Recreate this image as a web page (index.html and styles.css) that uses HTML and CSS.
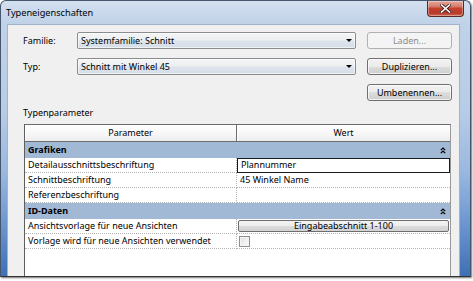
FILE: index.html
```html
<!DOCTYPE html>
<html>
<head>
<meta charset="utf-8">
<title>Typeneigenschaften</title>
<link rel="stylesheet" href="styles.css">
</head>
<body>
<div class="window">
  <div class="titlebar">
    <span class="title">Typeneigenschaften</span>
    <div class="close">
      <svg width="11" height="9" viewBox="0 0 11 9"><path d="M1.5 1 L9.5 8 M9.5 1 L1.5 8" stroke="#3a2020" stroke-width="3.2" stroke-linecap="square"/><path d="M1.5 1 L9.5 8 M9.5 1 L1.5 8" stroke="#ffffff" stroke-width="1.6" stroke-linecap="square"/></svg>
    </div>
  </div>
  <div class="client">
    <div class="form">
      <span class="lbl">Familie:</span>
      <div class="combo"><span>Systemfamilie: Schnitt</span><i class="arrow"></i></div>
      <div class="btn disabled">Laden...</div>
      <span class="lbl">Typ:</span>
      <div class="combo"><span>Schnitt mit Winkel 45</span><i class="arrow"></i></div>
      <div class="btn">Duplizieren...</div>
      <div class="btn col3">Umbenennen...</div>
    </div>
    <div class="section">Typenparameter</div>
    <div class="table">
      <div class="thead">
        <div class="th">Parameter</div>
        <div class="th">Wert</div>
      </div>
      <div class="group"><span>Grafiken</span><svg class="chev" width="6" height="7" viewBox="0 0 6 7"><path d="M0.8 3.2 L3 1 L5.2 3.2 M0.8 6.2 L3 4 L5.2 6.2" fill="none" stroke="#000" stroke-width="1.2"/></svg></div>
      <div class="row"><div class="c1">Detailausschnittsbeschriftung</div><div class="c2 edit">Plannummer</div></div>
      <div class="row"><div class="c1">Schnittbeschriftung</div><div class="c2">45 Winkel Name</div></div>
      <div class="row"><div class="c1">Referenzbeschriftung</div><div class="c2"></div></div>
      <div class="group"><span>ID-Daten</span><svg class="chev" width="6" height="7" viewBox="0 0 6 7"><path d="M0.8 3.2 L3 1 L5.2 3.2 M0.8 6.2 L3 4 L5.2 6.2" fill="none" stroke="#000" stroke-width="1.2"/></svg></div>
      <div class="row"><div class="c1">Ansichtsvorlage für neue Ansichten</div><div class="c2 btncell"><div class="cellbtn">Eingabeabschnitt 1-100</div></div></div>
      <div class="row"><div class="c1">Vorlage wird für neue Ansichten verwendet</div><div class="c2 chkcell"><span class="chk"></span></div></div>
      <div class="empty"></div>
    </div>
  </div>
</div>
</body>
</html>
```
FILE: styles.css
```css
* { box-sizing: border-box; }
html, body { margin: 0; padding: 0; background: #ffffff; }
body {
  width: 473px;
  height: 281px;
  overflow: hidden;
  font-family: "Noto Sans", "Open Sans", sans-serif;
  font-size: 9px;
  color: #000;
}
.window {
  width: 471px;
  height: 277px;
  border: 1px solid #46566c;
  border-bottom-color: #333;
  border-radius: 6px 6px 0 0;
  background: linear-gradient(to bottom, #d3e0ef 0px, #c0d2e8 23px, #b7cce6 110px, #9ab8e0 170px, #6f98d0 220px, #3e6fb4 276px);
  box-shadow: 1px 1px 2px rgba(0,0,0,0.55);
  display: flex;
  flex-direction: column;
  overflow: hidden;
}
.titlebar {
  height: 23px;
  display: flex;
  align-items: flex-start;
  padding-left: 5px;
}
.title {
  font-size: 9.2px;
  line-height: 23px;
  color: #000;
}
.close {
  margin-left: auto;
  margin-right: 6px;
  width: 37px;
  height: 16px;
  border: 1px solid #5a2a24;
  border-top: none;
  border-radius: 0 0 4px 4px;
  background: linear-gradient(to bottom, #e3a89c 0%, #d6806e 35%, #c4412e 50%, #b8392a 80%, #cc6a50 100%);
  box-shadow: inset 0 0 0 1px rgba(255,255,255,0.35);
  display: flex;
  align-items: center;
  justify-content: center;
}
.client {
  flex: 1;
  margin: 0 10px 0 6px;
  background: #f0f0f0;
  border: 1px solid #a2b3c9;
  border-bottom: none;
  padding: 7px 0 0 15px;
  display: flex;
  flex-direction: column;
  min-height: 0;
}
.form {
  display: grid;
  grid-template-columns: 54px 279px 96px;
  grid-auto-rows: 17px;
  row-gap: 9px;
  align-items: center;
}
.lbl { line-height: 17px; }
.combo {
  height: 17px;
  border: 1px solid #8b8c8e;
  border-radius: 2px;
  background: linear-gradient(to bottom, #f4f5f6 0%, #eceef0 48%, #dde4ec 52%, #d5dde7 100%);
  box-shadow: inset 0 0 0 1px rgba(255,255,255,0.6);
  display: flex;
  align-items: center;
  padding: 0 3px 0 3px;
}
.combo span { flex: 1; line-height: 15px; }
.arrow {
  width: 0; height: 0;
  border-left: 3px solid transparent;
  border-right: 3px solid transparent;
  border-top: 3px solid #000;
}
.btn {
  justify-self: end;
  width: 85px;
  height: 17px;
  border: 1px solid #707070;
  border-radius: 3px;
  background: linear-gradient(to bottom, #f2f2f2 0%, #ebebeb 50%, #dddddd 50%, #cfcfcf 100%);
  box-shadow: inset 0 0 0 1px rgba(255,255,255,0.7);
  text-align: center;
  line-height: 15px;
}
.btn.disabled {
  border-color: #adb2b5;
  background: #f4f4f4;
  box-shadow: none;
  color: #8c8c8c;
}
.btn.col3 { grid-column: 3; }
.section {
  margin-top: 6px;
  line-height: 12px;
}
.table {
  margin: 5px 0 0 1px;
  width: 427px;
  flex: 1;
  background: #ffffff;
  border-left: 1px solid #5e5e5e;
  border-top: 1px solid #6a6a6a;
  border-right: 1px solid #9a9a9a;
  display: flex;
  flex-direction: column;
}
.thead {
  display: grid;
  grid-template-columns: 212px 213px;
  height: 17px;
  border-bottom: 1px solid #6d6d6d;
}
.th {
  text-align: center;
  line-height: 16px;
  background: linear-gradient(to bottom, #ffffff 0%, #f6f6f6 60%, #ececec 100%);
  border-right: 1px solid #6d6d6d;
  box-shadow: inset 1px 1px 0 #ffffff;
}
.th:last-child { border-right: none; }
.group {
  height: 16px;
  background: #a2b9d5;
  display: flex;
  align-items: center;
  padding: 0 4px 0 3px;
  font-weight: bold;
}
.group span { flex: 1; line-height: 16px; }
.chev { display: block; }
.row {
  display: grid;
  grid-template-columns: 212px 213px;
  height: 15px;
}
.c1, .c2 {
  border-bottom: 1px dotted #b5b5b5;
  line-height: 14px;
  padding-left: 3px;
  white-space: nowrap;
  overflow: hidden;
}
.c1 { border-right: 1px dotted #b5b5b5; }
.c2.edit {
  border: 1px solid #1a1a1a;
  line-height: 12px;
  padding-left: 3px;
}
.btncell { padding: 1px 1px 0 1px; }
.cellbtn {
  height: 12px;
  border: 1px solid #6e6e6e;
  border-radius: 2px;
  background: linear-gradient(to bottom, #f4f4f4 0%, #ececec 50%, #dcdcdc 50%, #d2d2d2 100%);
  text-align: center;
  line-height: 10px;
}
.chkcell { display: flex; align-items: center; padding-left: 2px; }
.chk {
  width: 11px;
  height: 11px;
  border: 1px solid #8f8f8f;
  background: linear-gradient(to bottom right, #e2e2e2, #fbfbfb);
  box-shadow: inset 0 0 0 1px #f4f4f4;
}
.empty { flex: 1; }
```
